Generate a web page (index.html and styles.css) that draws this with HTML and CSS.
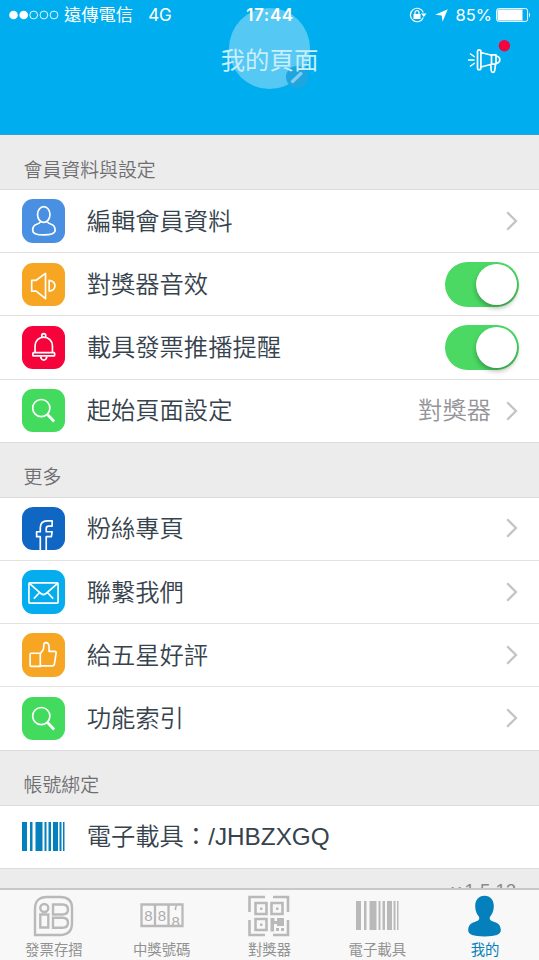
FILE: index.html
```html
<!DOCTYPE html>
<html lang="zh-Hant">
<head>
<meta charset="utf-8">
<title>我的頁面</title>
<link rel="stylesheet" href="styles.css">
</head>
<body>
<svg class="defs" width="0" height="0" aria-hidden="true">
  <symbol id="chevron" viewBox="0 0 12 20"><path d="M1.2 1.2 10 10l-8.800 8.800" fill="none" stroke="#c4c4c8" stroke-width="2.300"/></symbol>
  <symbol id="search" viewBox="0 0 44 44"><circle cx="19.500" cy="19.300" r="8.700"/><path d="m26 26 6.500 6.800" stroke-width="2.800"/></symbol>
  <symbol id="barcode" viewBox="0 0 43 29"><path d="M0 0h5v29H0zM8 0h2.500v29H8zM13.500 0h7v29h-7zM22.500 0h2v29h-2zM26.500 0H29v29h-2.500zM31 0h5v29h-5zM37.500 0h2v29h-2zM41 0h1.500v29H41z" fill="currentColor"/></symbol>
</svg>
<div class="app">
  <header class="header">
    <div class="avatar"></div>
    <svg class="edit" viewBox="0 0 22 22"><circle cx="11" cy="11" r="11" fill="#1fa6df"/><path d="m6.500 15.500 8.500-8" stroke="#82cdf0" stroke-width="3.200" stroke-linecap="round"/></svg>
    <div class="status">
      <div class="status-left">
        <svg class="signal" width="50" height="10" viewBox="0 0 50 10"><g fill="#fff"><circle cx="4.500" cy="5" r="4.300"/><circle cx="14.700" cy="5" r="4.300"/></g><g fill="none" stroke="#fff" stroke-width=".9"><circle cx="24.700" cy="5" r="3.900"/><circle cx="34.900" cy="5" r="3.900"/><circle cx="45" cy="5" r="3.900"/></g></svg>
        <span class="carrier">遠傳電信</span><span class="net">4G</span>
      </div>
      <span class="time">17:44</span>
      <div class="status-right">
        <svg class="lock" width="18" height="16" viewBox="0 0 18 16"><path d="M14.300 5.500A6.700 6.700 0 1 0 14.300 10.500" fill="none" stroke="#fff" stroke-width="1.200"/><path d="M12 6.500h5.500l-2.700 3.400zM4.500 7h7v5h-7z" fill="#fff"/><path d="M6 7.500V5.700a2 2 0 0 1 4 0v1.800" fill="none" stroke="#fff" stroke-width="1.200"/></svg>
        <svg class="arrow" width="13" height="13" viewBox="0 0 13 13"><path d="M12.800.2 7.500 12.800 6.700 6.500.2 5.800z" fill="#fff"/></svg>
        <span class="percent">85%</span>
        <svg width="35" height="14" viewBox="0 0 35 14"><rect x=".6" y=".6" width="31" height="12.800" rx="2" fill="none" stroke="#fff" stroke-width="1"/><path d="M1.500 1.500h25v11h-25z" fill="#fff"/><path d="M33 4.500q2.200 2.500 0 5z" fill="#fff"/></svg>
      </div>
    </div>
    <h1 class="title">我的頁面</h1>
    <svg class="megaphone" viewBox="0 0 46 38"><g fill="none" stroke="#fff" stroke-width="1.700" stroke-linejoin="round"><path d="M11.500 11.500q0-1.700 1.700-1.700t1.700 1.700v16.500q0 1.700-1.700 1.700t-1.700-1.700zM15 12.500l10.500 2.700v9L15 27M25.500 14.800h4.500v9.400h-4.500zM30 16q3.800.5 3.800 3.700T30 23.300M24.800 24.500l.4 6q.2 1.800 1.800 1.800t1.700-1.800l.8-6"/><path d="M2 20h6.500M4 13.500l4.700 3.500M4 26.500l4.700-3.500" stroke-width="1.400"/></g><circle cx="38.400" cy="5.700" r="5.700" fill="#f6033b"/></svg>
  </header>

  <main class="content">
    <h2 class="section first">會員資料與設定</h2>
    <ul class="group">
      <li class="row">
        <svg class="tile blue" viewBox="0 0 44 44"><ellipse cx="22" cy="15.700" rx="6.300" ry="8"/><path d="M18.500 23q-.2 1.500-3 2.300-4.700 1.200-4.700 6.200 0 4.800 11.400 4.800t11.300-4.800q0-5-4.600-6.200-2.900-.8-3.100-2.300"/></svg>
        <span class="label">編輯會員資料</span><svg class="chev"><use href="#chevron"/></svg>
      </li>
      <li class="row">
        <svg class="tile orange" viewBox="0 0 44 44"><path d="M9.800 17.500h4.500l9.500-7v25.500l-9.500-7.500H9.800zM27.500 17.500q5.800.7 5.800 5.500t-5.800 5.500z"/></svg>
        <span class="label">對獎器音效</span><span class="toggle"><i class="knob"></i></span>
      </li>
      <li class="row">
        <svg class="tile red" viewBox="0 0 44 44"><path d="M13.200 26.500V20a8.800 8.800 0 0 1 17.600 0v6.500M20 11.400V9.500q0-1.700 2-1.700t2 1.700v1.900M18.800 31q.7 3.500 3.200 3.500t3.200-3.500"/><rect x="11" y="27" width="22" height="3.300" rx=".7"/></svg>
        <span class="label">載具發票推播提醒</span><span class="toggle"><i class="knob"></i></span>
      </li>
      <li class="row">
        <svg class="tile green"><use href="#search"/></svg>
        <span class="label">起始頁面設定</span><span class="value">對獎器</span><svg class="chev"><use href="#chevron"/></svg>
      </li>
    </ul>

    <h2 class="section">更多</h2>
    <ul class="group">
      <li class="row">
        <svg class="tile navy" viewBox="0 0 44 44"><path d="M18.500 44.500V30h-3.700v-5h3.700v-4q0-7 7-7h5v5.300h-3.500q-2.500 0-2.500 2.500V25h6l-.8 5h-5.200v14.500"/></svg>
        <span class="label">粉絲專頁</span><svg class="chev"><use href="#chevron"/></svg>
      </li>
      <li class="row">
        <svg class="tile cyan" viewBox="0 0 44 44"><rect x="7" y="13" width="29.500" height="20.500" rx="1"/><path d="m7.500 13.500 11.700 10.300q2.500 2 5 0L36 13.500M12 29l5.300-5.700M31.500 29l-5.300-5.700"/></svg>
        <span class="label">聯繫我們</span><svg class="chev"><use href="#chevron"/></svg>
      </li>
      <li class="row">
        <svg class="tile orange" viewBox="0 0 44 44"><path d="M9 20.500h9.500v13.200H9q-.8 0-.8-.8V21.300q0-.8.8-.8zM18.500 21l3-4.300q.5-1 .5-3.700 0-3.200 2.200-3.200 3.200 0 3.200 5.200v3.500h5.400q1.900 0 1.700 1.800l-1.700 11q-.3 2-2.200 2H18.500"/></svg>
        <span class="label">給五星好評</span><svg class="chev"><use href="#chevron"/></svg>
      </li>
      <li class="row">
        <svg class="tile green"><use href="#search"/></svg>
        <span class="label">功能索引</span><svg class="chev"><use href="#chevron"/></svg>
      </li>
    </ul>

    <h2 class="section">帳號綁定</h2>
    <ul class="group">
      <li class="row">
        <svg class="code"><use href="#barcode"/></svg>
        <span class="label">電子載具：/JHBZXGQ</span>
      </li>
    </ul>
    <p class="version">v.1.5.12</p>
  </main>

  <nav class="tabs">
    <a class="tab"><svg width="42" height="42" viewBox="0 0 42 42"><g fill="none" stroke="#b9b9b9" stroke-width="2.400"><path d="M2 14Q2 2 14 2h13q12 0 12 11v15q0 12-12 12H2z"/><circle cx="11.300" cy="13" r="4"/><path d="M7.300 19.500h8v13h-8zM20 9.500h9.500q5.500 0 5.500 5t-5.500 5H20zM20 22.800h9.500q5.500 0 5.500 5t-5.500 5H20z"/></g></svg><span>發票存摺</span></a>
    <a class="tab"><svg width="44" height="42" viewBox="0 0 44 42"><g fill="none" stroke="#b9b9b9" stroke-width="2.300"><path d="M1.500 9.500h41V31h-41zM15 9.500V31M28.500 9.500V31"/></g><svg x="2" y="10.500" width="39.500" height="19.500" viewBox="2 10.500 39.500 19.500"><g fill="#adadad" class="digits"><text x="4.300" y="25.500">8</text><text x="17.800" y="25.500">8</text><text x="31.500" y="32">8</text><text x="32" y="14.500">7</text></g></svg></svg><span>中獎號碼</span></a>
    <a class="tab"><svg width="42" height="42" viewBox="0 0 42 42"><g fill="none" stroke="#b9b9b9" stroke-width="2.600"><path d="M1.500 17V2H17M25 2h15v15M40 25v15H25M17 40H1.500V25"/><path d="M7.500 8h11v11h-11zM23.500 8h11v11h-11zM7.500 24h11v11h-11z"/></g><path d="M12 12.500h2.500V15H12zM28 12.500h2.500V15H28zM12 28.500h2.500V31H12zM22.500 23h4v3h2.500v-3h7v8h-7v-2h-3v7.500h-3.500zM28 33h3v3h-3zM33 33h3v3h-3z" fill="#b9b9b9"/></svg><span>對獎器</span></a>
    <a class="tab"><svg class="tab-code" width="43" height="42" viewBox="0 0 43 42"><use href="#barcode" y="6" width="43" height="29"/></svg><span>電子載具</span></a>
    <a class="tab active"><svg width="34" height="42" viewBox="0 0 34 42"><path d="M16.500.8c6 0 9.300 4.400 9.300 10.400 0 4.500-1.600 8-3.800 10.600-1 3 .8 4.200 4.300 5.100 4.600 1.200 6.500 4.200 6.500 8.300 0 4.300-5 6.200-16.300 6.200S.2 39.500.2 35.200c0-4.100 1.900-7.100 6.500-8.300 3.500-.9 5.300-2.100 4.300-5.100-2.200-2.600-3.800-6.100-3.800-10.600C7.200 5.200 10.500.8 16.500.8z" fill="#0480bd"/></svg><span>我的</span></a>
  </nav>
</div>
</body>
</html>
```
FILE: styles.css
```css
* { box-sizing: border-box; }

body {
  margin: 0;
  font-family: "Liberation Sans", "Noto Sans CJK TC", sans-serif;
  font-weight: 350;
  color: #36434d;
}

.defs { position: absolute; }

.app {
  position: relative;
  width: 539px;
  height: 960px;
  overflow: hidden;
  background: #ececec;
}

.header {
  position: relative;
  height: 135px;
  background: #00aeef;
  border-bottom: 1px solid #2ba5d6;
  color: #fff;
}

.avatar {
  position: absolute;
  left: 229px;
  top: 8px;
  width: 81px;
  height: 81px;
  border-radius: 50%;
  background: #55c8f4;
}

.edit {
  position: absolute;
  left: 286px;
  top: 66px;
  width: 22px;
  height: 22px;
}

.status {
  position: relative;
  display: grid;
  grid-template-columns: 1fr auto 1fr;
  align-items: center;
  height: 30px;
  padding: 0 8px 0 9px;
  font-size: 18px;
  line-height: 30px;
}

.status-left, .status-right { display: flex; align-items: center; }
.status-right { justify-content: flex-end; }
.carrier { margin-left: 5px; font-size: 17.3px; font-weight: 400; }
.net { margin-left: 15px; font: 17px/30px Inter, sans-serif; }
.time { font: 600 17px/30px Inter, sans-serif; letter-spacing: .6px; }
.arrow { margin: 0 8px 0 8px; }
.percent { margin-right: 4px; font: 16.500px/30px Inter, sans-serif; }

.title {
  position: relative;
  margin: 0;
  font-size: 24.4px;
  line-height: 62px;
  font-weight: 400;
  text-align: center;
  color: #c9eefc;
}

.megaphone {
  position: absolute;
  left: 466px;
  top: 40px;
  width: 46px;
  height: 38px;
}

.section {
  display: flex;
  align-items: flex-end;
  height: 55px;
  margin: 0;
  padding: 0 23.500px 5px;
  font-size: 18.9px;
  line-height: 28px;
  font-weight: 350;
  color: #6f6f72;
}

.section.first { height: 54px; padding-bottom: 4.500px; }

.group {
  margin: 0;
  padding: 0;
  list-style: none;
  background: #fff;
  box-shadow: inset 0 1px #dcdcdc, 0 1px #dcdcdc;
}

.group:first-of-type { padding-top: 1px; }

.row {
  display: flex;
  align-items: center;
  height: 63.200px;
  padding: 0 20px 0 21.700px;
}

.group:first-of-type .row:first-child { height: 62.200px; }
.group:last-of-type .row { height: 63px; }
.row + .row { border-top: 1px solid #e2e2e4; }

.tile {
  flex: none;
  width: 43.500px;
  height: 43.500px;
  border-radius: 11px;
  fill: none;
  stroke: #fff;
  stroke-width: 1.700;
  stroke-linejoin: round;
}

.blue { background: #4990e2; }
.orange { background: #f6a623; }
.red { background: #f6033b; }
.green { background: #43db5e; }
.navy { background: #1066c3; }
.cyan { background: #05adef; }

.label {
  flex: 1;
  margin-left: 21.500px;
  padding-top: 1.500px;
  font-size: 24.300px;
  line-height: 36px;
  white-space: nowrap;
}

.value { margin-right: 15px; padding-top: 1.500px; font-size: 24.300px; line-height: 36px; color: #95959a; }
.chev { flex: none; width: 12px; height: 20px; margin-right: 1px; }

.toggle {
  display: flex;
  justify-content: flex-end;
  width: 74px;
  height: 45px;
  padding: 2px;
  border-radius: 23px;
  background: #4bd964;
}

.knob {
  width: 41px;
  height: 41px;
  border-radius: 50%;
  background: #fff;
  box-shadow: 0 3px 5px rgba(0, 0, 0, .3);
}

.code { flex: none; width: 43px; height: 29px; margin-right: .5px; color: #0480bd; }

.version {
  margin: 0;
  padding: 11px 23px 0;
  font-size: 18.500px;
  line-height: 24px;
  text-align: right;
  color: #8a8a8a;
}

.tabs {
  position: absolute;
  left: 0;
  right: 0;
  bottom: 0;
  display: flex;
  height: 72px;
  padding-top: 5px;
  border-top: 2px solid #c8c8c9;
  background: #f8f8f8;
}

.tab {
  flex: 1;
  display: flex;
  flex-direction: column;
  align-items: center;
  font-size: 14.400px;
  line-height: 22px;
  font-weight: 400;
  color: #929292;
}

.tab > svg { flex: none; }
.tab span { margin-top: 2px; }
.tab-code { color: #b9b9b9; }
.digits { font: 15px "Liberation Sans", sans-serif; }
.active { color: #0480bd; }
```
